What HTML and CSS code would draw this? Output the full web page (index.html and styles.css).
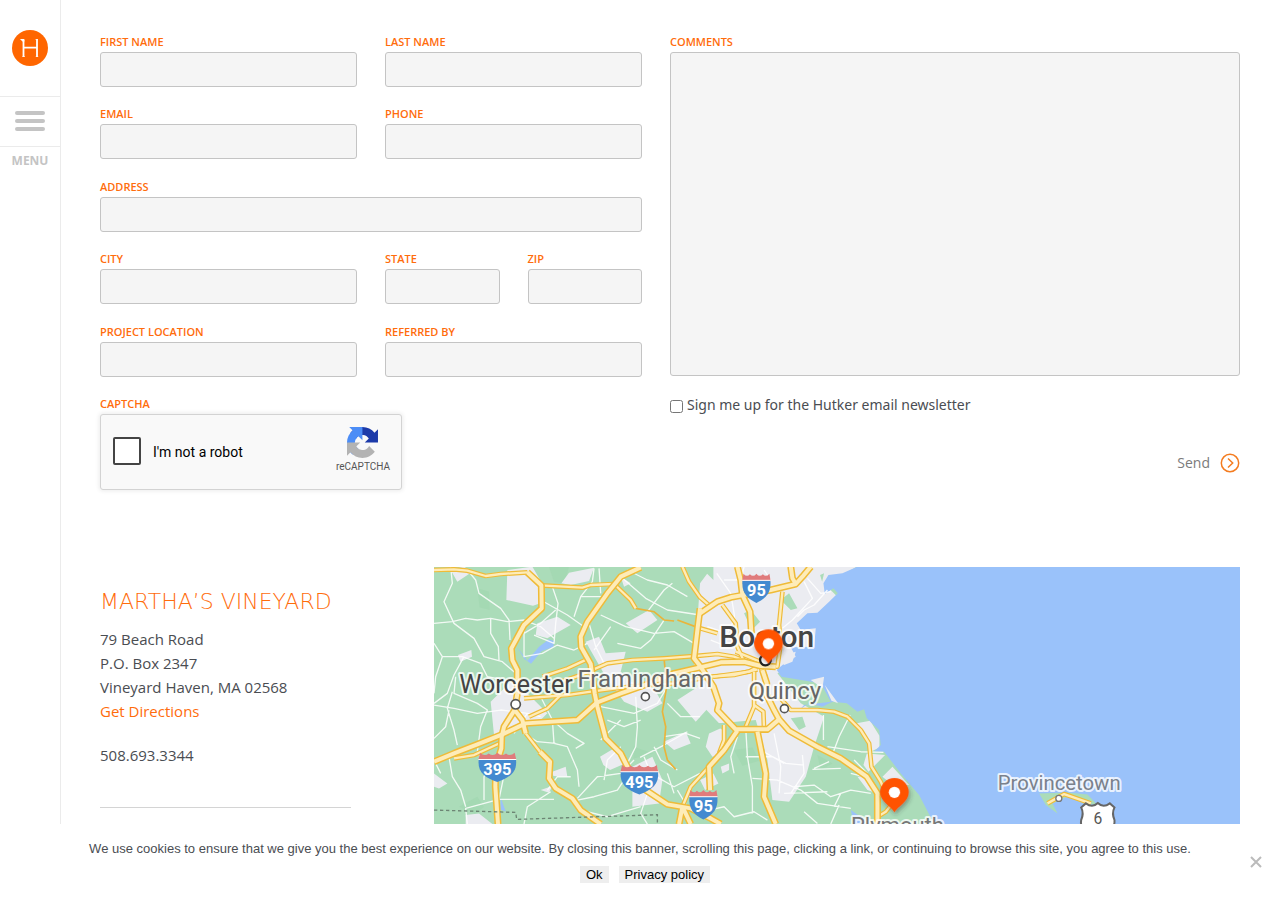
FILE: index.html
```html
<!DOCTYPE html>
<html lang="en">
<head>
<meta charset="utf-8">
<meta name="viewport" content="width=device-width, initial-scale=1">
<title>Hutker Architects – Contact</title>
<link rel="stylesheet" href="styles.css">
</head>
<body>
<nav class="sidebar" aria-label="Site">
  <a class="logo" href="#" aria-label="Hutker home">
    <svg viewBox="0 0 36 36" width="36" height="36" aria-hidden="true">
      <circle cx="18" cy="18" r="18" fill="#f60"/>
      <path d="M11.500 10v16.800M25 9.300v17.500M11.500 17.700h13.500" fill="none" stroke="#fff" stroke-width="1.800"/>
      <path d="M10.400 26.500h2.400M23.800 26.500h2.400M23.600 9.500h2.400" fill="none" stroke="#fff" stroke-width=".8"/>
      <path d="M8 9h4.400v2.500h-2z" fill="#fff"/>
    </svg>
  </a>
  <button class="menu-button" type="button">
    <span class="bars"><span class="bar"></span><span class="bar"></span><span class="bar"></span></span>
    <span class="menu-label">MENU</span>
  </button>
</nav>

<main class="content">
  <form class="contact">
    <div class="fields">
      <div class="row">
        <div class="field"><label for="first">FIRST NAME</label><input type="text" id="first"></div>
        <div class="field"><label for="last">LAST NAME</label><input type="text" id="last"></div>
      </div>
      <div class="row">
        <div class="field"><label for="email">EMAIL</label><input type="email" id="email"></div>
        <div class="field"><label for="phone">PHONE</label><input type="tel" id="phone"></div>
      </div>
      <div class="row">
        <div class="field wide"><label for="address">ADDRESS</label><input type="text" id="address"></div>
      </div>
      <div class="row">
        <div class="field"><label for="city">CITY</label><input type="text" id="city"></div>
        <div class="row">
          <div class="field"><label for="state">STATE</label><input type="text" id="state"></div>
          <div class="field"><label for="zip">ZIP</label><input type="text" id="zip"></div>
        </div>
      </div>
      <div class="row">
        <div class="field"><label for="project">PROJECT LOCATION</label><input type="text" id="project"></div>
        <div class="field"><label for="referred">REFERRED BY</label><input type="text" id="referred"></div>
      </div>
      <div class="field">
        <span class="caption">CAPTCHA</span>
        <div class="captcha">
          <input type="checkbox" id="robot" class="robot-box">
          <label for="robot" class="robot-label">I'm not a robot</label>
          <div class="captcha-brand">
            <svg viewBox="0 0 64 64" width="31" height="31" aria-hidden="true">
              <path fill="#1c3aa9" d="M64 31.955l-.033-1.370V4.687l-7.160 7.160C50.948 4.674 42.033.093 32.050.093c-10.400 0-19.622 4.960-25.458 12.640l11.736 11.860a15.550 15.550 0 0 1 4.754-5.334c2.050-1.600 4.952-2.906 8.968-2.906.485 0 .860.057 1.135.163 4.976.393 9.288 3.140 11.828 7.124l-8.307 8.307L64 31.953"/>
              <path fill="#4c8df6" d="M31.862.094l-1.370.033H4.594l7.160 7.160C4.580 13.147 0 22.060 0 32.046c0 10.400 4.960 19.622 12.640 25.458L24.500 45.768a15.550 15.550 0 0 1-5.334-4.754c-1.600-2.050-2.906-4.952-2.906-8.968 0-.485.057-.860.163-1.135.393-4.976 3.140-9.288 7.124-11.828l8.307 8.307L31.860.095"/>
              <path fill="#b3b3b3" d="M.001 32.045l.033 1.370v25.898l7.160-7.160c5.860 7.173 14.774 11.754 24.760 11.754 10.400 0 19.622-4.960 25.458-12.640l-11.736-11.860a15.550 15.550 0 0 1-4.754 5.334c-2.050 1.600-4.952 2.906-8.968 2.906-.485 0-.860-.057-1.135-.163-4.976-.393-9.288-3.140-11.828-7.124l8.307-8.307c-10.522.040-22.400.066-27.295-.005"/>
            </svg>
            <span class="captcha-name">reCAPTCHA</span>
          </div>
        </div>
      </div>
    </div>
    <div class="message">
      <div class="field"><label for="comments">COMMENTS</label><textarea id="comments"></textarea></div>
      <div class="signup"><input type="checkbox" id="news"><label for="news" class="signup-label">Sign me up for the Hutker email newsletter</label></div>
      <button class="send" type="submit">Send
        <svg viewBox="0 0 20 20" width="20" height="20" aria-hidden="true"><circle cx="10" cy="10" r="8.700"/><path d="M8 5.500l4.700 4.500L8 14.500"/></svg>
      </button>
    </div>
  </form>

  <section class="locations">
    <div class="office">
      <h2>MARTHA’S VINEYARD</h2>
      <address>79 Beach Road<br>P.O. Box 2347<br>Vineyard Haven, MA 02568<br><a href="#">Get Directions</a></address>
      <p class="tel">508.693.3344</p>
    </div>
    <svg class="map" viewBox="0 21 2418 900" preserveAspectRatio="xMidYMin slice" role="img" aria-label="Map of office locations">
      <defs>
        <g id="highways">
          <path d="M0 605L60 580 130 553 205 523 275 490 430 480 488 428 560 400 640 372 720 340 798 322 860 307 930 305 980 318 1025 320"/>
          <path d="M280 37L322 76 323 145 270 195 232 265 235 300 250 330 250 400 242 450 210 500 203 530 202 565 185 620 184 680 192 792"/>
          <path d="M242 450L265 480 275 520"/>
          <path d="M318 575L348 605 345 655 365 685 415 715 440 750 500 792"/>
          <path d="M620 22L560 50 520 100 460 185 440 230 442 262 470 312 482 400 490 440 515 535 560 580 580 620 620 680 700 733 770 745 830 775 860 792"/>
          <path d="M798 145L790 210 780 295 798 318 838 380 855 430 850 450 905 508 1000 508 1035 478"/>
          <path d="M910 20L920 60 925 105 948 155 952 220"/>
          <path d="M798 160L850 125 890 112 1010 90 1085 72 1105 50 1130 20M1070 20L1075 55 1085 72"/>
          <path d="M985 330L998 370 995 400 1020 450 1035 478 1065 512 1150 560 1220 595 1298 650 1330 700 1330 792"/>
          <path d="M970 515L995 640 990 710 1025 792"/>
          <path d="M910 512L870 570 825 620 828 690M745 740L735 792M745 740L770 792"/>
        </g>
        <g id="routes">
          <path d="M0 30L60 28 100 32 155 48 200 42 280 37M320 76L445 83 470 75 540 72 590 120 605 145"/>
          <path d="M745 20L765 65 798 112 830 140"/>
          <path d="M325 350L400 325 465 295M380 365L440 345 520 310 595 300 690 295 798 287 850 282 900 290 970 320"/>
          <path d="M270 415L400 405 470 395 600 378 720 370 830 350 900 345 970 328"/>
          <path d="M285 470L340 445 380 405M60 595L120 585 200 548M275 520L318 575"/>
          <path d="M838 350L945 335 970 320M798 205L850 220M905 275L990 310"/>
          <path d="M1045 95L1035 195 1040 250 1030 320 1015 320"/>
          <path d="M865 135L905 190 910 260 930 305M980 325L995 350M960 335L960 440 935 500M960 435L988 455 990 510"/>
          <path d="M1035 410L1070 450 1150 450 1200 455 1240 470 1280 510 1305 550 1312 620 1340 665 1360 710"/>
          <path d="M870 495L870 540 855 580M820 625L770 680 745 740M1330 770L1355 755 1375 730"/>
        </g>
        <g id="shield">
          <path d="M-52-26Q-38-14-26-24Q-12-14 0-26Q12-14 26-24Q38-14 52-26L57-4H-57Z" fill="#e07b7c"/>
          <path d="M-56-5H56C60 32 37 49 0 62C-37 49-60 32-56-5Z" fill="#448ad0"/>
          <path d="M-57-6H57" stroke="#fff" stroke-width="3"/>
        </g>
        <g id="pin">
          <path d="M0 60C-8 43-43 28-43 0A43 43 0 0 1 43 0C43 28 9 43 0 60Z" fill="#ff5200"/>
          <circle r="17" fill="#fff"/>
        </g>
        <filter id="pinshadow" x="-50%" y="-30%" width="200%" height="190%"><feDropShadow dx="4" dy="8" stdDeviation="6" flood-color="#333" flood-opacity=".4"/></filter>
      </defs>
      <rect y="21" width="2418" height="900" fill="#abdcb9"/>
      <g class="parks">
        <path d="M130 85l35 10 2 55-30-8zM345 20l60 0-15 50-30-5zM75 740l55-30 20 30-25 20zM598 560l60 20-60 15zM900 570l55-8 20 40-50 15zM1150 585l45 25-35 20z"/>
      </g>
      <g class="urban">
        <path d="M835 20L1268 20 1200 60 1180 80 1210 110 1165 165 1160 300 1060 330 1030 340 1100 430 1170 470 1140 560 1115 650 1065 725 1015 720 1000 600 965 480 855 490 798 430 780 320 798 70z"/>
        <path d="M220 30l75-10 35 60 2 45-35 12-80-17zM405 38l75-15-15 40-55 12-28-5zM50 30l40-10 25 15-45 30zM455 245l40-15 20 50 60-5-15 60 30 30 70 20 25 45-45 25-70-30-55-75zM72 285l40-15 2 20-35 15zM170 425l60-60 50 35 60 60-30 30-80 25-50 10zM730 420l70-45 35 55-50 55zM498 590l50-30 25 50-45 20-20-15zM595 620l60-30 30 70-10 70-80 10zM95 765l40-5 40 32h-80zM0 640l40 30-25 15-15-5zM355 635l40-15 5 30-42-2zM690 545l65-30 15 35-50 20zM575 190l70-40 25 30-60 40zM310 190l60-20 40 25-70 40-35-10zM560 50l30 20-20 10zM320 690l35-12-10 20z"/>
        <path d="M1268 490l40-8 28 45v35l-25 12-20-40zM1298 580l55 5-50 50-15-20zM1270 650l30 0 30 50-30-10zM1345 650l30-30 50 55-50 0z"/>
        <path d="M825 520l45-20 5 80-40 10-20-30zM798 660l40-20 15 30-40 20zM860 620l25-10 0 20-20 10z"/>
      </g>
      <g class="green">
        <path d="M798 20h40v40zM1040 120l25-20 25 45-20 5zM930 160l20-10 28 35-25 25zM840 490l40 0-15 20zM1070 475l35-5 10 30-20 10zM1158 45l12-5-6 25z"/>
      </g>
      <path class="water" d="M1270 20L1225 40 1183 45 1168 70 1172 102 1198 85 1211 100 1185 125 1150 158 1120 160 1088 190 1100 210 1145 205 1140 260 1070 262 1085 290 1045 315 1028 330 1042 350 1160 370 1190 425 1110 435 1098 448 1125 430 1165 440 1195 425 1238 430 1270 455 1290 448 1298 475 1335 510 1340 555 1320 575 1350 575 1400 640 1455 705 1500 792 1530 921H2418V20z"/>
      <path class="water" d="M1250 750l60 42h-50zM250 262l30 40 35-42 30-22 15 5-2 18-35 12-32 38-20-14zM200 712l15 42-15-5z"/>
      <path class="urban" d="M1033 290l52-15-10 30-25 10zM1172 375l40 55-20-8zM1130 360l40-10-5 35z"/>
      <g class="minor">
        <path d="M50 20L55 70 30 125 60 190 120 235 150 290 205 305 245 340M100 30L125 60 135 100 200 145 225 180 228 240M0 190L55 185 95 175 130 180 170 175 220 185 270 180 320 200 360 235M170 175L170 220 193 260 195 300M355 80L372 130 365 190 360 250 300 225M270 180L270 290 325 280 370 255 420 270 460 250M365 150L320 190 270 220M320 120L400 165 450 200M480 25L475 65 440 110 420 170M520 110L440 110M495 25L500 100M560 50L635 115 700 150 798 165M580 30L640 60 700 75 760 110M640 155L690 90 715 70M500 165L575 200 660 220 720 215 780 250M530 200L480 270M465 190L485 260 510 310M550 250L620 265 650 240 690 180"/>
        <path d="M0 250L25 290 5 350 0 400M25 290L85 290 140 310 160 350 210 360M90 290L60 345 40 400 0 430M55 395L40 445 60 510 70 555M0 435L60 445 130 460 200 450 280 460 320 470M65 350L60 400 130 430 160 450 140 500 130 575 150 610M0 535L35 500 45 450M280 460L240 520M320 410L355 480 360 550 400 560 430 630 435 680M270 520L310 545 365 550M355 480L400 520 450 550 425 565M500 440L600 460 670 430 700 380M605 410L610 500 605 560 580 610M520 480L570 500 620 480M500 540L560 480M700 430L740 470 798 470M690 530L755 520 798 535M618 592L690 555 760 515M600 600L560 640 490 650 430 715M430 720L480 710 550 690 590 630M510 660L520 600 560 560M45 590L55 650 80 690 95 740M100 792L95 745 195 718 360 718M175 600L150 650 150 720M210 645L195 718M270 792L280 740 350 695M410 650L370 650 340 690M630 590L650 640 720 680 798 640M660 560L680 600 730 630M440 750L520 770 620 740M640 700L620 760 640 792M730 690L760 740M700 640L720 700M0 600L20 640"/>
        <path d="M848 40L890 100 900 160 910 260M990 30L1010 60 990 90 1040 90M1120 55L1160 100 1190 95M1110 65L1135 115 1075 180 1045 205M1180 90L1140 135 1110 150 1090 170M930 20L920 60 870 60M820 200L880 220 900 180M830 240L880 260 920 250M1168 465L1168 540M1248 465L1215 530 1198 575M935 505L940 590 955 680 955 760M910 530L890 590 900 640M935 590L1015 590 1055 610 1110 615M1020 520L1040 620 1035 700M980 570L1050 610M1105 585L1110 640 1070 700M1140 625L1185 605M1135 628L1220 625M955 655L1030 660 1100 690 1150 730 1250 745M1080 680L1140 675 1190 710 1250 690 1310 700M1050 700L1180 695M825 750L870 740 900 770 960 755 1000 780M1110 755L1150 790M1215 735L1190 792M1220 700L1200 740M1250 640L1310 655M1180 560L1280 575 1348 577M1300 640L1260 600"/>
      </g>
      <path d="M605 145L660 155 690 180 720 183M730 180L798 205M690 295L698 380 685 455 695 500 690 560 700 600 725 628" fill="none" stroke="#e9b43b" stroke-width="5"/>
      <use href="#routes" class="edge" stroke-width="14"/>
      <use href="#routes" class="core" stroke-width="7"/>
      <use href="#highways" class="edge" stroke-width="21"/>
      <use href="#highways" class="core" stroke-width="12"/>
      <path d="M0 750L245 757 248 778 670 764 670 792" fill="none" stroke="#6d8574" stroke-width="4" stroke-dasharray="10 8"/>
      <g fill="#fff" stroke="#555" stroke-width="5">
        <circle cx="245" cy="433" r="14"/><circle cx="634" cy="410" r="12"/><circle cx="1051" cy="446" r="12"/>
        <circle cx="994" cy="300" r="16" stroke="#222" stroke-width="7"/>
      </g>
      <path d="M1815 700L1900 697 1960 703 1990 735 1950 730 1900 710 1855 730 1870 760 1835 735z" fill="#abdcb9"/>
      <path d="M1840 730L1890 702 1970 730" class="edge" stroke-width="14"/>
      <path d="M1840 730L1890 702 1970 730" class="core" stroke-width="7"/>
      <circle cx="1874" cy="715" r="9" fill="#fff" stroke="#777" stroke-width="4"/>
      <path d="M1941 742L1955 730Q1975 745 1991 729Q2007 745 2027 730L2041 742Q2032 760 2041 780C2044 810 2010 820 1991 832C1970 820 1935 810 1941 780Q1950 760 1941 742Z" fill="#fff" stroke="#666" stroke-width="6"/>
      <g class="towns">
        <text x="246" y="399" font-size="75" fill="#444">Worcester</text>
        <text x="632" y="380" font-size="72" fill="#666">Framingham</text>
        <text x="998" y="260" font-size="90" font-weight="500" fill="#444">Boston</text>
        <text x="1052" y="417" font-size="72" fill="#666">Quincy</text>
        <text x="1390" y="820" font-size="66" fill="#777">Plymouth</text>
        <text x="1875" y="690" font-size="61" fill="#7a818c">Provincetown</text>
        <text x="1991" y="792" font-size="47" fill="#555" class="plain">6</text>
      </g>
      <use href="#shield" x="190" y="604"/><use href="#shield" x="616" y="641"/><use href="#shield" transform="translate(808 716) scale(.75 1)"/><use href="#shield" transform="translate(967 67) scale(.75 1)"/>
      <g class="numbers">
        <text x="190" y="645">395</text><text x="616" y="683">495</text><text x="808" y="756">95</text><text x="967" y="109">95</text>
      </g>
      <g filter="url(#pinshadow)"><use href="#pin" x="1003" y="251"/><use href="#pin" x="1381" y="697"/></g>
    </svg>
  </section>
</main>

<aside class="cookies" aria-label="Cookie notice">
  <p>We use cookies to ensure that we give you the best experience on our website. By closing this banner, scrolling this page, clicking a link, or continuing to browse this site, you agree to this use.</p>
  <div class="cookie-actions"><button type="button">Ok</button><button type="button">Privacy policy</button></div>
  <button class="close" type="button" aria-label="Close">
    <svg viewBox="0 0 12 12" width="12" height="12" aria-hidden="true"><path d="M1 1l10 10M11 1L1 11" stroke="#bbb" stroke-width="2"/></svg>
  </button>
</aside>
</body>
</html>
```
FILE: styles.css
```css
* { box-sizing: border-box; }
body {
  margin: 0;
  background: #fff;
  color: #4a4d52;
  font: 15px/24px "Open Sans", sans-serif;
}
a { color: #ff6c0c; text-decoration: none; }
button { font: inherit; border: 0; padding: 0; background: none; cursor: pointer; }
input, textarea { margin: 0; font: inherit; }

.sidebar {
  position: fixed;
  top: 0;
  bottom: 0;
  left: 0;
  width: 61px;
  border-right: 1px solid #ebebeb;
  background: #fff;
}
.logo { display: flex; justify-content: center; padding: 30px 0; }
.logo svg { display: block; }
.menu-button { display: block; width: 100%; }
.bars {
  display: flex;
  flex-direction: column;
  align-items: center;
  gap: 4px;
  padding: 14px 0 15px;
  border-top: 1px solid #ebebeb;
  border-bottom: 1px solid #ebebeb;
}
.bar { width: 30px; height: 4px; border-radius: 2px; background: #c4c4c4; }
.menu-label { display: block; padding-top: 2px; font-family: "Noto Sans", sans-serif; font-size: 12px; font-weight: 700; color: #c4c4c4; }

.content { padding: 34px 40px 0 100px; }
.contact { display: grid; grid-template-columns: 1fr 1fr; }
.fields {
  display: flex;
  flex-direction: column;
  justify-content: space-between;
  padding-right: 28px;
}
.row { display: grid; grid-template-columns: 1fr 1fr; gap: 28px; }
.wide { grid-column: 1 / -1; }
.field { min-width: 0; }
.field > label, .caption {
  display: block;
  padding-bottom: 2px;
  font-size: 11px;
  font-weight: 600;
  line-height: 16px;
  color: #ff6c0c;
}
.field > input, textarea {
  display: block;
  width: 100%;
  height: 35px;
  padding: 0 8px;
  border: 1px solid #c4c4c4;
  border-radius: 3px;
  background: #f5f5f5;
}
.field > textarea { height: 324px; resize: none; }

.captcha {
  display: flex;
  align-items: center;
  width: 302px;
  height: 76px;
  padding: 0 11px 2px 12px;
  border: 1px solid #d3d3d3;
  border-radius: 3px;
  background: #f9f9f9;
  box-shadow: 0 0 4px 1px rgba(0, 0, 0, .08);
  font-family: Roboto, sans-serif;
  color: #000;
}
.robot-box {
  appearance: none;
  width: 28px;
  height: 28px;
  border: 2px solid #444;
  border-radius: 2px;
  background: #fff;
}
.robot-label { flex: 1; padding: 2px 0 0 12px; font-size: 14px; }
.captcha-brand { display: flex; flex-direction: column; align-items: center; }
.captcha-name { padding-top: 1px; font-size: 10px; line-height: 16px; color: #555; }

.message { display: flex; flex-direction: column; }
.signup { display: flex; align-items: center; gap: 4px; padding-top: 17px; font-family: "Noto Sans", sans-serif; font-size: 14px; }
.signup input { width: 13px; height: 13px; margin-top: 3px; }
.send {
  display: flex;
  align-items: center;
  gap: 10px;
  align-self: flex-end;
  margin: 34px 0 15px;
  font-size: 14px;
  color: #7b7b7b;
}
.send svg { fill: none; stroke: #f47c20; stroke-width: 1.5; }

.locations {
  display: grid;
  grid-template-columns: 22% 1fr;
  gap: 83px;
  padding-top: 77px;
}
.office { align-self: start; padding: 23px 0 40px; border-bottom: 1px solid #d4d4d4; }
.office h2 {
  margin: 0 0 13px;
  font: 200 22px/24px "DejaVu Sans", sans-serif;
  color: #ff6c0c;
  white-space: nowrap;
}
address { font-style: normal; }
.tel { margin: 20px 0 0; }

.map { display: block; width: 100%; height: 300px; font-family: Roboto, sans-serif; }
.parks { fill: #9dd6ae; opacity: .5; }
.urban { fill: #ebecf1; }
.green { fill: #abdcb9; }
.water { fill: #9ac2fa; }
.minor { fill: none; stroke: #fff; stroke-width: 4; stroke-linejoin: round; opacity: .85; }
.edge { fill: none; stroke: #efbb38; stroke-linejoin: round; }
.core { fill: none; stroke: #feecb8; stroke-linejoin: round; }
.towns text { text-anchor: middle; paint-order: stroke; stroke: #fff; stroke-opacity: .8; stroke-width: 12; stroke-linejoin: round; }
.towns .plain { stroke: none; }
.numbers text { text-anchor: middle; font-size: 49px; font-weight: 700; fill: #fff; }

.cookies {
  position: fixed;
  right: 0;
  bottom: 0;
  left: 0;
  padding: 15px 40px 17px;
  background: #fff;
  font: 13px/20px "Liberation Sans", Arial, sans-serif;
  text-align: center;
}
.cookies p { margin: 0 0 7px; }
.cookie-actions { display: flex; justify-content: center; gap: 10px; padding-left: 10px; }
.cookie-actions button { padding: 0 6px; line-height: 17px; background: #eee; color: #000; }
.close { position: absolute; top: 50%; right: 18px; line-height: 0; transform: translateY(-50%); }
```
